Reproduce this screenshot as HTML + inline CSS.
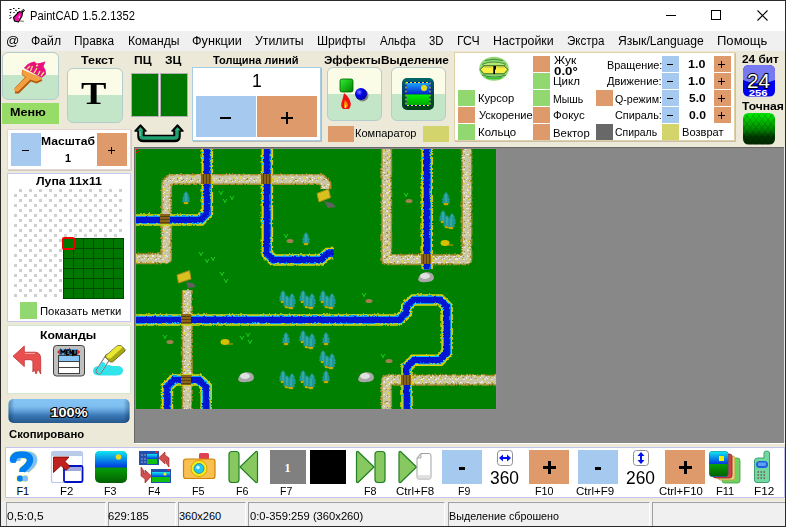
<!DOCTYPE html>
<html><head><meta charset="utf-8">
<style>
*{margin:0;padding:0;box-sizing:border-box}
html,body{width:786px;height:527px;overflow:hidden;background:#ece9d8;font-family:"Liberation Sans",sans-serif;font-size:11px;color:#000;position:relative}
.a{position:absolute}
.t{position:absolute;white-space:nowrap;line-height:1;transform-origin:0 0}
#menu span{position:absolute;top:35px;white-space:nowrap;font-size:12px;line-height:1}
.btn{position:absolute;border:1px solid #b4cccc;border-radius:6px}
.bl{position:absolute;background:#a6c9ef}
.or{position:absolute;background:#de9a6a}
.gr{position:absolute;background:#92d870}
.ye{position:absolute;background:#d4d46c}
.dg{position:absolute;background:#686868}
svg{position:absolute;overflow:visible}
</style></head><body>
<div class="a" style="left:0;top:0;width:786px;height:31px;background:#fff"></div>
<div class="a" style="left:0;top:31px;width:786px;height:20px;background:#f0f0f0"></div>

<!-- window controls -->
<div class="a" style="left:666px;top:15px;width:10px;height:1px;background:#000"></div>
<div class="a" style="left:711px;top:10px;width:10px;height:10px;border:1px solid #000"></div>
<svg style="left:757px;top:10px" width="11" height="11"><path d="M0.5 0.5L10.5 10.5M10.5 0.5L0.5 10.5" stroke="#000" stroke-width="1.1"/></svg>

<!-- top toolbar -->
<div class="btn" style="left:2px;top:52px;width:57px;height:48px;background:linear-gradient(#fafce8 0,#fafce8 22px,#c4e6c8 22px)"></div>
<div class="a" style="left:2px;top:103px;width:57px;height:21px;background:#98dc68"></div>
<div class="btn" style="left:67px;top:68px;width:56px;height:55px;background:linear-gradient(#fafce8 0,#fafce8 26px,#c4e6c8 26px)"></div>
<div class="a" style="left:131px;top:73px;width:28px;height:44px;background:#007800;border:1px solid #b0b0b0"></div>
<div class="a" style="left:160px;top:73px;width:28px;height:44px;background:#007800;border:1px solid #b0b0b0"></div>
<div class="a" style="left:192px;top:67px;width:129px;height:74px;background:#fff;border:1px solid #a8cce4;box-shadow:1px 1px 0 #b8b8b8"></div>
<div class="bl" style="left:196px;top:96px;width:60px;height:41px"></div>
<div class="or" style="left:257px;top:96px;width:60px;height:41px"></div>
<div class="a" style="left:220px;top:117px;width:11px;height:2px;background:#000"></div>
<div class="a" style="left:281px;top:117px;width:12px;height:2px;background:#000"></div>
<div class="a" style="left:286px;top:112px;width:2px;height:12px;background:#000"></div>
<div class="btn" style="left:327px;top:67px;width:55px;height:54px;background:linear-gradient(#fafce8 0,#fafce8 26px,#c4e6c8 26px)"></div>
<div class="btn" style="left:391px;top:67px;width:55px;height:54px;background:linear-gradient(#fafce8 0,#fafce8 26px,#c4e6c8 26px)"></div>
<div class="or" style="left:328px;top:126px;width:26px;height:16px"></div>
<div class="ye" style="left:423px;top:126px;width:26px;height:16px"></div>
<!-- params panel -->
<div class="a" style="left:454px;top:52px;width:281px;height:89px;background:#fff;border:1px solid #e0d0a8;box-shadow:1px 1px 0 #c8c0a8"></div>
<div class="gr" style="left:458px;top:90px;width:17px;height:16px"></div>
<div class="or" style="left:458px;top:107px;width:17px;height:16px"></div>
<div class="gr" style="left:458px;top:124px;width:17px;height:16px"></div>
<div class="or" style="left:533px;top:56px;width:17px;height:16px"></div>
<div class="gr" style="left:533px;top:73px;width:17px;height:16px"></div>
<div class="gr" style="left:533px;top:90px;width:17px;height:16px"></div>
<div class="or" style="left:533px;top:107px;width:17px;height:16px"></div>
<div class="or" style="left:533px;top:124px;width:17px;height:16px"></div>
<div class="or" style="left:596px;top:90px;width:17px;height:16px"></div>
<div class="dg" style="left:596px;top:124px;width:17px;height:16px"></div>
<div class="bl" style="left:662px;top:56px;width:17px;height:16px"></div>
<div class="bl" style="left:662px;top:73px;width:17px;height:16px"></div>
<div class="bl" style="left:662px;top:90px;width:17px;height:16px"></div>
<div class="bl" style="left:662px;top:107px;width:17px;height:16px"></div>
<div class="ye" style="left:662px;top:124px;width:17px;height:16px"></div>
<div class="or" style="left:714px;top:56px;width:17px;height:16px"></div>
<div class="or" style="left:714px;top:73px;width:17px;height:16px"></div>
<div class="or" style="left:714px;top:90px;width:17px;height:16px"></div>
<div class="or" style="left:714px;top:107px;width:17px;height:16px"></div>
<!-- minus/plus signs in params -->
<div class="a" style="left:667px;top:64px;width:6px;height:1px;background:#000"></div>
<div class="a" style="left:667px;top:81px;width:6px;height:1px;background:#000"></div>
<div class="a" style="left:667px;top:98px;width:6px;height:1px;background:#000"></div>
<div class="a" style="left:667px;top:115px;width:6px;height:1px;background:#000"></div>
<div class="a" style="left:718px;top:64px;width:7px;height:1px;background:#000"></div>
<div class="a" style="left:721px;top:61px;width:1px;height:7px;background:#000"></div>
<div class="a" style="left:718px;top:81px;width:7px;height:1px;background:#000"></div>
<div class="a" style="left:721px;top:78px;width:1px;height:7px;background:#000"></div>
<div class="a" style="left:718px;top:98px;width:7px;height:1px;background:#000"></div>
<div class="a" style="left:721px;top:95px;width:1px;height:7px;background:#000"></div>
<div class="a" style="left:718px;top:115px;width:7px;height:1px;background:#000"></div>
<div class="a" style="left:721px;top:112px;width:1px;height:7px;background:#000"></div>

<!-- left panel -->
<div class="a" style="left:7px;top:129px;width:124px;height:41px;background:#fff;border:1px solid #e4d4d4;box-shadow:1px 1px 0 #d0ccc0"></div>
<div class="bl" style="left:11px;top:133px;width:30px;height:33px"></div>
<div class="or" style="left:97px;top:133px;width:30px;height:33px"></div>
<div class="a" style="left:22px;top:150px;width:7px;height:1px;background:#000"></div>
<div class="a" style="left:108px;top:150px;width:7px;height:1px;background:#000"></div>
<div class="a" style="left:111px;top:147px;width:1px;height:7px;background:#000"></div>
<div class="a" style="left:7px;top:173px;width:124px;height:149px;background:#fff;border:1px solid #c8c8f4"></div>



<div class="gr" style="left:20px;top:302px;width:17px;height:17px"></div>
<svg style="left:0;top:0" width="140" height="330" viewBox="0 0 140 330"><defs><pattern id="dots" x="13" y="188" width="10" height="10" patternUnits="userSpaceOnUse"><rect x="6" y="1" width="3" height="3" fill="#cfcfcf"/><rect x="1" y="6" width="3" height="3" fill="#cfcfcf"/></pattern>
<pattern id="grid" x="63" y="238" width="10" height="10" patternUnits="userSpaceOnUse"><rect width="10" height="10" fill="#004800"/><rect x="1" y="1" width="9" height="9" fill="#007800"/></pattern></defs>
<rect x="13" y="188" width="110" height="110" fill="url(#dots)"/>
<rect x="63" y="238" width="61" height="61" fill="url(#grid)"/><rect x="63" y="298" width="61" height="1" fill="#004800"/><rect x="123" y="238" width="1" height="61" fill="#004800"/>
<rect x="63" y="238" width="11" height="11" fill="none" stroke="#f00000" stroke-width="2" rx="1"/></svg>

<div class="a" style="left:7px;top:325px;width:124px;height:69px;background:#fff;border:1px solid #d0e8d0"></div>


<!-- canvas area -->
<div class="a" style="left:134px;top:147px;width:650px;height:296px;background:#888;border-left:1px solid #686868;border-top:1px solid #686868"></div>
<div class="a" style="left:784px;top:147px;width:1px;height:297px;background:#e8e8e8"></div>
<div class="a" style="left:134px;top:443px;width:651px;height:1px;background:#fff"></div>
<div class="a" style="left:135px;top:148px;width:362px;height:262px;background:#908890"></div>
<svg style="left:136px;top:149px" width="360" height="260" viewBox="136 149 360 260"><defs><clipPath id="cc"><rect x="136" y="149" width="360" height="260"/></clipPath><pattern id="rt" width="7" height="6" patternUnits="userSpaceOnUse"><rect width="7" height="6" fill="#c8c4a4"/><rect x="0" y="0" width="2" height="1" fill="#e4e4dc"/><rect x="4" y="3" width="2" height="1" fill="#e8e8e0"/><rect x="2" y="2" width="1" height="2" fill="#e0d840"/><rect x="5" y="0" width="1" height="1" fill="#d8d040"/><rect x="1" y="4" width="1" height="1" fill="#a08c38"/><rect x="6" y="5" width="1" height="1" fill="#b0a048"/><rect x="3" y="5" width="1" height="1" fill="#eeeee4"/></pattern><filter id="jit" x="-5%" y="-5%" width="110%" height="110%"><feTurbulence type="turbulence" baseFrequency="0.35" numOctaves="1" seed="3"/><feDisplacementMap in="SourceGraphic" scale="2.2" xChannelSelector="R" yChannelSelector="G"/></filter></defs><g clip-path="url(#cc)"><rect x="136" y="149" width="360" height="260" fill="#008000"/><g filter="url(#jit)"><path d="M325,188 V183 L320.5,178.6 H170 L165.6,183 V257.7 H130" fill="none" stroke="#a48a2c" stroke-width="11" stroke-linejoin="round"/><path d="M325,188 V183 L320.5,178.6 H170 L165.6,183 V257.7 H130" fill="none" stroke="url(#rt)" stroke-width="8" stroke-linejoin="round"/><path d="M385.7,140 V258.8 H465.9 V140" fill="none" stroke="#a48a2c" stroke-width="11" stroke-linejoin="round"/><path d="M385.7,140 V258.8 H465.9 V140" fill="none" stroke="url(#rt)" stroke-width="8" stroke-linejoin="round"/><path d="M186.3,289.2 V415" fill="none" stroke="#a48a2c" stroke-width="11" stroke-linejoin="round"/><path d="M186.3,289.2 V415" fill="none" stroke="url(#rt)" stroke-width="8" stroke-linejoin="round"/><path d="M385.6,415 V379.2 H500" fill="none" stroke="#a48a2c" stroke-width="11" stroke-linejoin="round"/><path d="M385.6,415 V379.2 H500" fill="none" stroke="url(#rt)" stroke-width="8" stroke-linejoin="round"/></g><g filter="url(#jit)"><path d="M206.3,140 V212.4 L199.7,218.9 H130" fill="none" stroke="#e0d000" stroke-width="11.5"/><path d="M206.3,140 V212.4 L199.7,218.9 H130" fill="none" stroke="#10c8f8" stroke-width="8.5"/><path d="M206.3,140 V212.4 L199.7,218.9 H130" fill="none" stroke="#0414d0" stroke-width="6.5"/><path d="M266.3,140 V253 L272.3,259 H320 L327,252.5 H333" fill="none" stroke="#e0d000" stroke-width="11.5"/><path d="M266.3,140 V253 L272.3,259 H320 L327,252.5 H333" fill="none" stroke="#10c8f8" stroke-width="8.5"/><path d="M266.3,140 V253 L272.3,259 H320 L327,252.5 H333" fill="none" stroke="#0414d0" stroke-width="6.5"/><path d="M426.2,140 V268.6" fill="none" stroke="#e0d000" stroke-width="11.5"/><path d="M426.2,140 V268.6" fill="none" stroke="#10c8f8" stroke-width="8.5"/><path d="M426.2,140 V268.6" fill="none" stroke="#0414d0" stroke-width="6.5"/><path d="M130,318.9 H398.5 L405.7,311.7 V306 L412.8,298.9 H439 L446.1,306 V351.9 L438.8,359.2 H413 L406,366.2 V415" fill="none" stroke="#e0d000" stroke-width="11.5"/><path d="M130,318.9 H398.5 L405.7,311.7 V306 L412.8,298.9 H439 L446.1,306 V351.9 L438.8,359.2 H413 L406,366.2 V415" fill="none" stroke="#10c8f8" stroke-width="8.5"/><path d="M130,318.9 H398.5 L405.7,311.7 V306 L412.8,298.9 H439 L446.1,306 V351.9 L438.8,359.2 H413 L406,366.2 V415" fill="none" stroke="#0414d0" stroke-width="6.5"/><path d="M166.4,415 V386 L173.4,379 H198.2 L205.2,386 V415" fill="none" stroke="#e0d000" stroke-width="11.5"/><path d="M166.4,415 V386 L173.4,379 H198.2 L205.2,386 V415" fill="none" stroke="#10c8f8" stroke-width="8.5"/><path d="M166.4,415 V386 L173.4,379 H198.2 L205.2,386 V415" fill="none" stroke="#0414d0" stroke-width="6.5"/></g><rect x="201" y="174" width="10" height="10" fill="#8a6418"/><path d="M203.5,174v10M206.5,174v10M209.5,174v10" stroke="#5a4010" stroke-width="1"/><rect x="261" y="174" width="10" height="10" fill="#8a6418"/><path d="M263.5,174v10M266.5,174v10M269.5,174v10" stroke="#5a4010" stroke-width="1"/><rect x="160" y="214" width="10" height="10" fill="#8a6418"/><path d="M160,216.5h10M160,219.5h10M160,222.5h10" stroke="#5a4010" stroke-width="1"/><rect x="421" y="254" width="10" height="10" fill="#8a6418"/><path d="M423.5,254v10M426.5,254v10M429.5,254v10" stroke="#5a4010" stroke-width="1"/><rect x="181" y="314" width="10" height="10" fill="#8a6418"/><path d="M181,316.5h10M181,319.5h10M181,322.5h10" stroke="#5a4010" stroke-width="1"/><rect x="181" y="375" width="10" height="10" fill="#8a6418"/><path d="M181,377.5h10M181,380.5h10M181,383.5h10" stroke="#5a4010" stroke-width="1"/><rect x="401" y="375" width="10" height="10" fill="#8a6418"/><path d="M403.5,375v10M406.5,375v10M409.5,375v10" stroke="#5a4010" stroke-width="1"/><path d="M404,193 l2,3 l2,-3 M406,196 v1" stroke="#20d020" stroke-width="1" fill="none"/><path d="M284,234 l2,3 l2,-3 M286,237 v1" stroke="#20d020" stroke-width="1" fill="none"/><path d="M362,293 l2,3 l2,-3 M364,296 v1" stroke="#20d020" stroke-width="1" fill="none"/><path d="M381,354 l2,3 l2,-3 M383,357 v1" stroke="#20d020" stroke-width="1" fill="none"/><path d="M163,335 l2,3 l2,-3 M165,338 v1" stroke="#20d020" stroke-width="1" fill="none"/><path d="M219,191 l2,3 l2,-3 M221,194 v1" stroke="#20d020" stroke-width="1" fill="none"/><path d="M223,199 l2,3 l2,-3 M225,202 v1" stroke="#20d020" stroke-width="1" fill="none"/><path d="M230,196 l2,3 l2,-3 M232,199 v1" stroke="#20d020" stroke-width="1" fill="none"/><path d="M199,252 l2,3 l2,-3 M201,255 v1" stroke="#20d020" stroke-width="1" fill="none"/><path d="M205,259 l2,3 l2,-3 M207,262 v1" stroke="#20d020" stroke-width="1" fill="none"/><path d="M211,257 l2,3 l2,-3 M213,260 v1" stroke="#20d020" stroke-width="1" fill="none"/><path d="M220,272 l2,3 l2,-3 M222,275 v1" stroke="#20d020" stroke-width="1" fill="none"/><path d="M224,279 l2,3 l2,-3 M226,282 v1" stroke="#20d020" stroke-width="1" fill="none"/><path d="M240,336 l2,3 l2,-3 M242,339 v1" stroke="#20d020" stroke-width="1" fill="none"/><path d="M248,340 l2,3 l2,-3 M250,343 v1" stroke="#20d020" stroke-width="1" fill="none"/><path d="M246,333 l2,3 l2,-3 M248,336 v1" stroke="#20d020" stroke-width="1" fill="none"/><ellipse cx="409" cy="201" rx="3.5" ry="2" fill="#a08050"/><ellipse cx="290" cy="241" rx="3.5" ry="2" fill="#a08050"/><ellipse cx="369" cy="301" rx="3.5" ry="2" fill="#a08050"/><ellipse cx="389" cy="361" rx="3.5" ry="2" fill="#a08050"/><ellipse cx="170" cy="342" rx="3.5" ry="2" fill="#a08050"/><path d="M186,191 L189,195 L188,195 L190,199 L189,199 L190,202 L182,202 L183,199 L182,199 L184,195 L183,195Z" fill="#1c9898"/><path d="M186,193 V201" stroke="#50b8a8" stroke-width="1"/><ellipse cx="186" cy="203" rx="2.5" ry="1.2" fill="#c8a800"/><path d="M306,232 L309,236 L308,236 L310,240 L309,240 L310,243 L302,243 L303,240 L302,240 L304,236 L303,236Z" fill="#1c9898"/><path d="M306,234 V242" stroke="#50b8a8" stroke-width="1"/><ellipse cx="306" cy="244" rx="2.5" ry="1.2" fill="#c8a800"/><path d="M446,192 L449,196 L448,196 L450,200 L449,200 L450,203 L442,203 L443,200 L442,200 L444,196 L443,196Z" fill="#1c9898"/><path d="M446,194 V202" stroke="#50b8a8" stroke-width="1"/><ellipse cx="446" cy="204" rx="2.5" ry="1.2" fill="#c8a800"/><path d="M286,332 L289,336 L288,336 L290,340 L289,340 L290,343 L282,343 L283,340 L282,340 L284,336 L283,336Z" fill="#1c9898"/><path d="M286,334 V342" stroke="#50b8a8" stroke-width="1"/><ellipse cx="286" cy="344" rx="2.5" ry="1.2" fill="#c8a800"/><path d="M326,332 L329,336 L328,336 L330,340 L329,340 L330,343 L322,343 L323,340 L322,340 L324,336 L323,336Z" fill="#1c9898"/><path d="M326,334 V342" stroke="#50b8a8" stroke-width="1"/><ellipse cx="326" cy="344" rx="2.5" ry="1.2" fill="#c8a800"/><path d="M326,370 L329,374 L328,374 L330,378 L329,378 L330,381 L322,381 L323,378 L322,378 L324,374 L323,374Z" fill="#1c9898"/><path d="M326,372 V380" stroke="#50b8a8" stroke-width="1"/><ellipse cx="326" cy="382" rx="2.5" ry="1.2" fill="#c8a800"/><path d="M446,192 L449,196 L448,196 L450,200 L449,200 L450,203 L442,203 L443,200 L442,200 L444,196 L443,196Z" fill="#1c9898"/><path d="M446,194 V202" stroke="#50b8a8" stroke-width="1"/><ellipse cx="446" cy="204" rx="2.5" ry="1.2" fill="#c8a800"/><path d="M283,290 L286,294 L285,294 L287,298 L286,298 L287,301 L279,301 L280,298 L279,298 L281,294 L280,294Z" fill="#1c9898"/><path d="M283,292 V300" stroke="#50b8a8" stroke-width="1"/><ellipse cx="283" cy="302" rx="2.5" ry="1.2" fill="#c8a800"/><path d="M292,293 L295,297 L294,297 L296,301 L295,301 L296,304 L288,304 L289,301 L288,301 L290,297 L289,297Z" fill="#1c9898"/><path d="M292,295 V303" stroke="#50b8a8" stroke-width="1"/><ellipse cx="292" cy="305" rx="2.5" ry="1.2" fill="#c8a800"/><path d="M287,295 L290,299 L289,299 L291,303 L290,303 L291,306 L283,306 L284,303 L283,303 L285,299 L284,299Z" fill="#1c9898"/><path d="M287,297 V305" stroke="#50b8a8" stroke-width="1"/><ellipse cx="287" cy="307" rx="2.5" ry="1.2" fill="#c8a800"/><path d="M291,296 L294,300 L293,300 L295,304 L294,304 L295,307 L287,307 L288,304 L287,304 L289,300 L288,300Z" fill="#1c9898"/><path d="M291,298 V306" stroke="#50b8a8" stroke-width="1"/><ellipse cx="291" cy="308" rx="2.5" ry="1.2" fill="#c8a800"/><path d="M303,290 L306,294 L305,294 L307,298 L306,298 L307,301 L299,301 L300,298 L299,298 L301,294 L300,294Z" fill="#1c9898"/><path d="M303,292 V300" stroke="#50b8a8" stroke-width="1"/><ellipse cx="303" cy="302" rx="2.5" ry="1.2" fill="#c8a800"/><path d="M312,293 L315,297 L314,297 L316,301 L315,301 L316,304 L308,304 L309,301 L308,301 L310,297 L309,297Z" fill="#1c9898"/><path d="M312,295 V303" stroke="#50b8a8" stroke-width="1"/><ellipse cx="312" cy="305" rx="2.5" ry="1.2" fill="#c8a800"/><path d="M307,295 L310,299 L309,299 L311,303 L310,303 L311,306 L303,306 L304,303 L303,303 L305,299 L304,299Z" fill="#1c9898"/><path d="M307,297 V305" stroke="#50b8a8" stroke-width="1"/><ellipse cx="307" cy="307" rx="2.5" ry="1.2" fill="#c8a800"/><path d="M311,296 L314,300 L313,300 L315,304 L314,304 L315,307 L307,307 L308,304 L307,304 L309,300 L308,300Z" fill="#1c9898"/><path d="M311,298 V306" stroke="#50b8a8" stroke-width="1"/><ellipse cx="311" cy="308" rx="2.5" ry="1.2" fill="#c8a800"/><path d="M323,290 L326,294 L325,294 L327,298 L326,298 L327,301 L319,301 L320,298 L319,298 L321,294 L320,294Z" fill="#1c9898"/><path d="M323,292 V300" stroke="#50b8a8" stroke-width="1"/><ellipse cx="323" cy="302" rx="2.5" ry="1.2" fill="#c8a800"/><path d="M332,293 L335,297 L334,297 L336,301 L335,301 L336,304 L328,304 L329,301 L328,301 L330,297 L329,297Z" fill="#1c9898"/><path d="M332,295 V303" stroke="#50b8a8" stroke-width="1"/><ellipse cx="332" cy="305" rx="2.5" ry="1.2" fill="#c8a800"/><path d="M327,295 L330,299 L329,299 L331,303 L330,303 L331,306 L323,306 L324,303 L323,303 L325,299 L324,299Z" fill="#1c9898"/><path d="M327,297 V305" stroke="#50b8a8" stroke-width="1"/><ellipse cx="327" cy="307" rx="2.5" ry="1.2" fill="#c8a800"/><path d="M331,296 L334,300 L333,300 L335,304 L334,304 L335,307 L327,307 L328,304 L327,304 L329,300 L328,300Z" fill="#1c9898"/><path d="M331,298 V306" stroke="#50b8a8" stroke-width="1"/><ellipse cx="331" cy="308" rx="2.5" ry="1.2" fill="#c8a800"/><path d="M303,330 L306,334 L305,334 L307,338 L306,338 L307,341 L299,341 L300,338 L299,338 L301,334 L300,334Z" fill="#1c9898"/><path d="M303,332 V340" stroke="#50b8a8" stroke-width="1"/><ellipse cx="303" cy="342" rx="2.5" ry="1.2" fill="#c8a800"/><path d="M312,333 L315,337 L314,337 L316,341 L315,341 L316,344 L308,344 L309,341 L308,341 L310,337 L309,337Z" fill="#1c9898"/><path d="M312,335 V343" stroke="#50b8a8" stroke-width="1"/><ellipse cx="312" cy="345" rx="2.5" ry="1.2" fill="#c8a800"/><path d="M307,335 L310,339 L309,339 L311,343 L310,343 L311,346 L303,346 L304,343 L303,343 L305,339 L304,339Z" fill="#1c9898"/><path d="M307,337 V345" stroke="#50b8a8" stroke-width="1"/><ellipse cx="307" cy="347" rx="2.5" ry="1.2" fill="#c8a800"/><path d="M311,336 L314,340 L313,340 L315,344 L314,344 L315,347 L307,347 L308,344 L307,344 L309,340 L308,340Z" fill="#1c9898"/><path d="M311,338 V346" stroke="#50b8a8" stroke-width="1"/><ellipse cx="311" cy="348" rx="2.5" ry="1.2" fill="#c8a800"/><path d="M323,350 L326,354 L325,354 L327,358 L326,358 L327,361 L319,361 L320,358 L319,358 L321,354 L320,354Z" fill="#1c9898"/><path d="M323,352 V360" stroke="#50b8a8" stroke-width="1"/><ellipse cx="323" cy="362" rx="2.5" ry="1.2" fill="#c8a800"/><path d="M332,353 L335,357 L334,357 L336,361 L335,361 L336,364 L328,364 L329,361 L328,361 L330,357 L329,357Z" fill="#1c9898"/><path d="M332,355 V363" stroke="#50b8a8" stroke-width="1"/><ellipse cx="332" cy="365" rx="2.5" ry="1.2" fill="#c8a800"/><path d="M327,355 L330,359 L329,359 L331,363 L330,363 L331,366 L323,366 L324,363 L323,363 L325,359 L324,359Z" fill="#1c9898"/><path d="M327,357 V365" stroke="#50b8a8" stroke-width="1"/><ellipse cx="327" cy="367" rx="2.5" ry="1.2" fill="#c8a800"/><path d="M331,356 L334,360 L333,360 L335,364 L334,364 L335,367 L327,367 L328,364 L327,364 L329,360 L328,360Z" fill="#1c9898"/><path d="M331,358 V366" stroke="#50b8a8" stroke-width="1"/><ellipse cx="331" cy="368" rx="2.5" ry="1.2" fill="#c8a800"/><path d="M283,370 L286,374 L285,374 L287,378 L286,378 L287,381 L279,381 L280,378 L279,378 L281,374 L280,374Z" fill="#1c9898"/><path d="M283,372 V380" stroke="#50b8a8" stroke-width="1"/><ellipse cx="283" cy="382" rx="2.5" ry="1.2" fill="#c8a800"/><path d="M292,373 L295,377 L294,377 L296,381 L295,381 L296,384 L288,384 L289,381 L288,381 L290,377 L289,377Z" fill="#1c9898"/><path d="M292,375 V383" stroke="#50b8a8" stroke-width="1"/><ellipse cx="292" cy="385" rx="2.5" ry="1.2" fill="#c8a800"/><path d="M287,375 L290,379 L289,379 L291,383 L290,383 L291,386 L283,386 L284,383 L283,383 L285,379 L284,379Z" fill="#1c9898"/><path d="M287,377 V385" stroke="#50b8a8" stroke-width="1"/><ellipse cx="287" cy="387" rx="2.5" ry="1.2" fill="#c8a800"/><path d="M291,376 L294,380 L293,380 L295,384 L294,384 L295,387 L287,387 L288,384 L287,384 L289,380 L288,380Z" fill="#1c9898"/><path d="M291,378 V386" stroke="#50b8a8" stroke-width="1"/><ellipse cx="291" cy="388" rx="2.5" ry="1.2" fill="#c8a800"/><path d="M303,370 L306,374 L305,374 L307,378 L306,378 L307,381 L299,381 L300,378 L299,378 L301,374 L300,374Z" fill="#1c9898"/><path d="M303,372 V380" stroke="#50b8a8" stroke-width="1"/><ellipse cx="303" cy="382" rx="2.5" ry="1.2" fill="#c8a800"/><path d="M312,373 L315,377 L314,377 L316,381 L315,381 L316,384 L308,384 L309,381 L308,381 L310,377 L309,377Z" fill="#1c9898"/><path d="M312,375 V383" stroke="#50b8a8" stroke-width="1"/><ellipse cx="312" cy="385" rx="2.5" ry="1.2" fill="#c8a800"/><path d="M307,375 L310,379 L309,379 L311,383 L310,383 L311,386 L303,386 L304,383 L303,383 L305,379 L304,379Z" fill="#1c9898"/><path d="M307,377 V385" stroke="#50b8a8" stroke-width="1"/><ellipse cx="307" cy="387" rx="2.5" ry="1.2" fill="#c8a800"/><path d="M311,376 L314,380 L313,380 L315,384 L314,384 L315,387 L307,387 L308,384 L307,384 L309,380 L308,380Z" fill="#1c9898"/><path d="M311,378 V386" stroke="#50b8a8" stroke-width="1"/><ellipse cx="311" cy="388" rx="2.5" ry="1.2" fill="#c8a800"/><path d="M443,210 L446,214 L445,214 L447,218 L446,218 L447,221 L439,221 L440,218 L439,218 L441,214 L440,214Z" fill="#1c9898"/><path d="M443,212 V220" stroke="#50b8a8" stroke-width="1"/><ellipse cx="443" cy="222" rx="2.5" ry="1.2" fill="#c8a800"/><path d="M452,213 L455,217 L454,217 L456,221 L455,221 L456,224 L448,224 L449,221 L448,221 L450,217 L449,217Z" fill="#1c9898"/><path d="M452,215 V223" stroke="#50b8a8" stroke-width="1"/><ellipse cx="452" cy="225" rx="2.5" ry="1.2" fill="#c8a800"/><path d="M447,215 L450,219 L449,219 L451,223 L450,223 L451,226 L443,226 L444,223 L443,223 L445,219 L444,219Z" fill="#1c9898"/><path d="M447,217 V225" stroke="#50b8a8" stroke-width="1"/><ellipse cx="447" cy="227" rx="2.5" ry="1.2" fill="#c8a800"/><path d="M451,216 L454,220 L453,220 L455,224 L454,224 L455,227 L447,227 L448,224 L447,224 L449,220 L448,220Z" fill="#1c9898"/><path d="M451,218 V226" stroke="#50b8a8" stroke-width="1"/><ellipse cx="451" cy="228" rx="2.5" ry="1.2" fill="#c8a800"/><path d="M418,280 Q419,273 426,272 Q434,272 434,278 Q433,282 426,282 Q420,283 418,280Z" fill="#a8a8a8"/><ellipse cx="425" cy="276" rx="5" ry="3" fill="#e0e0e0"/><path d="M238,380 Q239,373 246,372 Q254,372 254,378 Q253,382 246,382 Q240,383 238,380Z" fill="#a8a8a8"/><ellipse cx="245" cy="376" rx="5" ry="3" fill="#e0e0e0"/><path d="M358,380 Q359,373 366,372 Q374,372 374,378 Q373,382 366,382 Q360,383 358,380Z" fill="#a8a8a8"/><ellipse cx="365" cy="376" rx="5" ry="3" fill="#e0e0e0"/><ellipse cx="445" cy="243" rx="4.5" ry="3" fill="#d8c000"/><path d="M448,245 h5" stroke="#c8a000"/><ellipse cx="225" cy="342" rx="4.5" ry="3" fill="#d8c000"/><path d="M228,344 h5" stroke="#c8a000"/><path d="M317,193.5 L328.5,189 L330.5,197.5 L319,202Z" fill="#d8c020" stroke="#a89018" stroke-width="1"/><path d="M324,201 L332,203 L336,207 L328,208Z" fill="#606060"/><path d="M177,275 L189.5,270.6 L191,279 L178.5,283Z" fill="#d8c020" stroke="#a89018" stroke-width="1"/><path d="M186,282 L193,283 L196,287 L188,288Z" fill="#606060"/><path d="M136,149h1v1h-1zM139,149h1v2h-1zM138,151h1v1h-1zM136,152h2v1h-2z" fill="#f00000"/></g></svg>

<!-- bottom toolbar -->
<div class="a" style="left:5px;top:447px;width:780px;height:51px;background:#fff;border:1px solid #c4c4f0"></div>
<div class="a" style="left:270px;top:450px;width:36px;height:34px;background:#808080"></div>
<div class="a" style="left:310px;top:450px;width:36px;height:34px;background:#000"></div>
<div class="bl" style="left:442px;top:450px;width:40px;height:34px"></div>
<div class="or" style="left:529px;top:450px;width:40px;height:34px"></div>
<div class="bl" style="left:578px;top:450px;width:40px;height:34px"></div>
<div class="or" style="left:665px;top:450px;width:40px;height:34px"></div>
<div class="a" style="left:459px;top:467px;width:6px;height:3px;background:#000"></div>
<div class="a" style="left:595px;top:467px;width:6px;height:3px;background:#000"></div>
<div class="a" style="left:543px;top:466px;width:13px;height:3px;background:#000"></div>
<div class="a" style="left:548px;top:461px;width:3px;height:13px;background:#000"></div>
<div class="a" style="left:679px;top:466px;width:13px;height:3px;background:#000"></div>
<div class="a" style="left:684px;top:461px;width:3px;height:13px;background:#000"></div>

<!-- status bar -->
<div class="a" style="left:1px;top:498px;width:784px;height:28px;background:linear-gradient(#ece9d8 0,#ece9d8 2px,#f0f0f0 4px)"></div>
<div class="a" style="left:6px;top:502px;width:100px;height:24px;border-left:1px solid #a0a0a0;border-top:1px solid #a0a0a0;border-right:1px solid #fff"></div>
<div class="a" style="left:108px;top:502px;width:68px;height:24px;border-left:1px solid #a0a0a0;border-top:1px solid #a0a0a0;border-right:1px solid #fff"></div>
<div class="a" style="left:178px;top:502px;width:68px;height:24px;border-left:1px solid #a0a0a0;border-top:1px solid #a0a0a0;border-right:1px solid #fff"></div>
<div class="a" style="left:248px;top:502px;width:197px;height:24px;border-left:1px solid #a0a0a0;border-top:1px solid #a0a0a0;border-right:1px solid #fff"></div>
<div class="a" style="left:448px;top:502px;width:202px;height:24px;border-left:1px solid #a0a0a0;border-top:1px solid #a0a0a0;border-right:1px solid #fff"></div>
<div class="a" style="left:652px;top:502px;width:133px;height:24px;border-left:1px solid #a0a0a0;border-top:1px solid #a0a0a0"></div>

<svg style="left:0;top:0" width="786" height="527" viewBox="0 0 786 527"><defs><linearGradient id="gsq" x1="0" y1="0" x2="1" y2="1"><stop offset="0" stop-color="#30f030"/><stop offset="1" stop-color="#008000"/></linearGradient><radialGradient id="gball" cx="0.35" cy="0.35" r="0.7"><stop offset="0" stop-color="#8080ff"/><stop offset="0.4" stop-color="#0000f0"/><stop offset="1" stop-color="#0000a0"/></radialGradient><linearGradient id="gsky" x1="0" y1="0" x2="0" y2="1"><stop offset="0" stop-color="#20b0f8"/><stop offset="1" stop-color="#0020d0"/></linearGradient><linearGradient id="ggrass" x1="0" y1="0" x2="0" y2="1"><stop offset="0" stop-color="#00f000"/><stop offset="1" stop-color="#00a000"/></linearGradient><linearGradient id="gsky2" x1="0" y1="0" x2="0" y2="1"><stop offset="0" stop-color="#10e8f0"/><stop offset="1" stop-color="#0038e0"/></linearGradient><linearGradient id="ggrass2" x1="0" y1="0" x2="0" y2="1"><stop offset="0" stop-color="#10e010"/><stop offset="1" stop-color="#006000"/></linearGradient><linearGradient id="gsel" x1="0" y1="0" x2="0" y2="1"><stop offset="0" stop-color="#006868"/><stop offset="0.5" stop-color="#003870"/><stop offset="0.5" stop-color="#005828"/><stop offset="1" stop-color="#004018"/></linearGradient><linearGradient id="gprec" x1="0" y1="0" x2="0" y2="1"><stop offset="0" stop-color="#00f000"/><stop offset="0.55" stop-color="#008000"/><stop offset="0.75" stop-color="#003800"/><stop offset="1" stop-color="#002800"/></linearGradient><linearGradient id="gbarh" x1="0" y1="0" x2="1" y2="0"><stop offset="0" stop-color="#002040" stop-opacity="0.35"/><stop offset="0.05" stop-color="#002040" stop-opacity="0"/><stop offset="0.95" stop-color="#002040" stop-opacity="0"/><stop offset="1" stop-color="#002040" stop-opacity="0.35"/></linearGradient><linearGradient id="gbar" x1="0" y1="0" x2="0" y2="1"><stop offset="0" stop-color="#84c4f4"/><stop offset="0.3" stop-color="#80c0f0"/><stop offset="0.45" stop-color="#68a8e0"/><stop offset="0.7" stop-color="#3876b4"/><stop offset="1" stop-color="#28588c"/></linearGradient></defs><path d="M20,21 L24,21.5" stroke="#a0a080" stroke-width="1.5"/><path d="M13.5,17.5 L19.5,11.5 L22.5,12.5 L22,16 L18.5,22 L14.5,21Z" fill="#f010a0" stroke="#000" stroke-width="1.1" stroke-linejoin="round"/><path d="M19.5,15 L20,17.5 L18.5,18" fill="#fff" stroke="none"/><path d="M21,11 L23.5,9 L25,10.5 L23,12.5Z" fill="#000"/><path d="M22.5,11 l1,-1" stroke="#fff" stroke-width="0.8"/><path d="M9.5,9.5 h2 M13,8.5 h1.5 M15.5,10 l1,1 M18,8.5 h1.5 M10,12 l1,1 M14,12 v1 M17,12.5 h1 M9.5,15.5 h1 M11,17 v1 M9.5,18.5 h1" stroke="#000" stroke-width="1.2"/><path d="M23.9,68 L27.9,64 L31,62.4 L34.3,61.5 L36.7,63.6 L40,63 L45.5,61.5 L43.5,66.4 L45.5,70 L46,74.3 L43,76.7 L41.5,77.8Z" fill="#e8107c"/><path d="M27,69 l3,-3 M30.5,71 l2,-5 M34,73 l3,-5 M38,75 l2,-4 M41,76 l3,-4 M36,66 l2,-1" stroke="#e8e080" stroke-width="1.4"/><path d="M25,76.5 L32,79.5 L19,93 L15.5,93 L14,89.5Z" fill="#f0a040"/><path d="M22.3,69.5 L41.8,78 L42,80.5 L36.5,83 L27.5,79.5 L22,75Z" fill="#f0a040"/><path d="M42,80 L36.5,82.5 L30.5,80.5 L18.5,92.5 L15,92.5" stroke="#b85810" stroke-width="1.8" fill="none"/><path d="M22.5,70 L22,74.5 L26,77 L14.5,88.5" stroke="#c87020" stroke-width="0.8" fill="none"/><path d="M141,131 V136.5 Q141,138.5 143.5,138.5 H174.5 Q177,138.5 177,136.5 V131" fill="none" stroke="#000" stroke-width="7.5"/><path d="M135,131 L140.5,125 L146,131Z M172,131 L177.5,125 L183,131Z" fill="#000" stroke="#000" stroke-width="1.5" stroke-linejoin="round"/><path d="M141,130 V136 Q141,138 143.5,138 H174.5 Q177,138 177,136 V130" fill="none" stroke="#20a070" stroke-width="3.5"/><path d="M137.5,130.5 L140.5,127 L143.5,130.5Z M174.5,130.5 L177.5,127 L180.5,130.5Z" fill="#30b080"/><path d="M140,131 V136" stroke="#80e0c0" stroke-width="1"/><rect x="340" y="79" width="13" height="13" rx="2" fill="url(#gsq)" stroke="#006000" stroke-width="0.8"/><circle cx="362.5" cy="95.5" r="6" fill="#808080"/><circle cx="361" cy="94" r="6" fill="url(#gball)"/><path d="M344,93 Q349,97 350,101 Q352,105 349,109 L343,109 Q340,106 342,101 Q343,98 344,93Z" fill="#f01010"/><path d="M345,100 Q348,103 348,106 L345,108 Q343,105 345,100Z" fill="#ff9000"/><path d="M345.5,104 l1,4 l-2,0Z" fill="#ffff40"/><rect x="402" y="78" width="32" height="32" rx="5" fill="url(#gsel)"/><rect x="405.5" y="82" width="25" height="12.5" fill="url(#gsky)"/><rect x="405.5" y="94.5" width="25" height="11.5" fill="url(#ggrass)"/><circle cx="424" cy="88" r="3" fill="#e8d820"/><rect x="406" y="82.5" width="24" height="23" fill="none" stroke="#0000c0" stroke-width="1"/><rect x="406" y="82.5" width="24" height="23" fill="none" stroke="#f0f000" stroke-width="1" stroke-dasharray="2 2"/><ellipse cx="494" cy="68.7" rx="14.8" ry="12" fill="#90d870"/><path d="M485,60.5 Q494,58 503,60.5" stroke="#408840" stroke-width="1" fill="none"/><path d="M482.5,64 Q494,60 505.5,64 L504,66 H484Z" fill="#b8e870" stroke="#408840" stroke-width="0.9"/><path d="M482,75 Q494,79 506,75" stroke="#408840" stroke-width="1" fill="none"/><path d="M486,77.5 Q494,79.5 502,77.5" stroke="#30c030" stroke-width="1.5" fill="none"/><path d="M480,69.5 L484,65.8 H504 L508,69.5 L504,73.8 H484Z" fill="#f8f040" stroke="#306830" stroke-width="1"/><path d="M484,67.5 H492 M497,67.5 H504" stroke="#d8d050" stroke-width="1"/><path d="M493.3,66 H496 V69 L495,70 V74 H493.3Z" fill="#000"/><path d="M749,65 H769 Q775,65 775,71 V90.6 Q775,96.6 769,96.6 H749 Q743,96.6 743,90.6 V71 Q743,65 749,65Z" fill="#0000f0"/><path d="M749,65 H769 Q775,65 775,71 V80 Q759,87 743,80 V71 Q743,65 749,65Z" fill="#7878f0"/><text x="747" y="87.6" textLength="23" lengthAdjust="spacingAndGlyphs" font-family="Liberation Sans" font-size="21" fill="#fff" stroke="#000" stroke-width="2" paint-order="stroke">24</text><text x="748.8" y="96" textLength="18.8" lengthAdjust="spacingAndGlyphs" font-family="Liberation Sans" font-weight="bold" font-size="9.5" fill="#fff">256</text><defs><pattern id="lat" width="6" height="8" patternUnits="userSpaceOnUse"><path d="M0,0 L3,4 L0,8 M6,0 L3,4 L6,8" stroke="#000" stroke-opacity="0.18" stroke-width="1" fill="none"/></pattern></defs><path d="M749,113 H769 Q775,113 775,119 V138.5 Q775,144.5 769,144.5 H749 Q743,144.5 743,138.5 V119 Q743,113 749,113Z" fill="url(#gprec)"/><path d="M749,113 H769 Q775,113 775,119 V138.5 Q775,144.5 769,144.5 H749 Q743,144.5 743,138.5 V119 Q743,113 749,113Z" fill="url(#lat)"/><path d="M13,356.3 L24.3,346 V352.2 H35 Q40.7,352.2 40.7,359 V374 L38,369 L36,374 L34,369 L32.9,372 V362 Q32.9,359.7 30,359.7 H24.3 V366.6Z" fill="#e85050" stroke="#c03030" stroke-width="0.8"/><path d="M25,353.5 H35" stroke="#f8a0a0" stroke-width="1"/><rect x="53.5" y="345.5" width="31" height="30.5" rx="3" fill="#c0c0c0" stroke="#404040" stroke-width="1"/><rect x="58.5" y="355.5" width="21" height="18" fill="#fff" stroke="#404040" stroke-width="1"/><rect x="59" y="356" width="20" height="5" fill="#88c8f8"/><path d="M58.5,361.5 H79.5 M58.5,367.5 H79.5" stroke="#404040" stroke-width="1"/><rect x="60" y="349" width="17" height="6" fill="#60a0e0"/><path d="M60,349 L57,352 L60,355Z M77,349 L80.5,352 L77,355Z" fill="#e03030"/><path d="M61,354.5 V350 L63,352.5 L65,350 V354.5 M66.5,350 V354.5 H69 M66.5,350 H69 M66.5,352.2 H68.5 M70,354.5 V350 L72.5,354.5 V350 M73.8,350 V354.5 H76.2 V350" stroke="#000" stroke-width="1.3" fill="none"/><path d="M93,371 Q93,366 100,366 H105 Q108,364 112,366 H117 Q123,366 123,370.5 Q123,375.5 116,375.5 H100 Q93,375.5 93,371Z" fill="#30e4ec"/><path d="M99,371 L108,357" stroke="#806868" stroke-width="6.5" stroke-linecap="round"/><path d="M99,371 L108,357" stroke="#ffffff" stroke-width="4.6" stroke-linecap="round"/><path d="M99,371 L103,364.5" stroke="#30e4ec" stroke-width="4.6" stroke-linecap="round"/><path d="M105.5,356 L117.5,345.5 H121 L125,349.5 V351 L112.5,362 H110.5 L105.5,357.5Z" fill="#a8a810" stroke="#505030" stroke-width="0.8"/><path d="M105.8,356 L117.5,345.8 H120.8 L122.5,347.5 L110.5,358.5 L108,358.5Z" fill="#e8e834"/><rect x="8.5" y="399" width="121" height="24" rx="5" fill="url(#gbar)"/><rect x="8.5" y="399" width="121" height="24" rx="5" fill="url(#gbarh)"/><text x="50.5" y="416.5" textLength="37" lengthAdjust="spacingAndGlyphs" font-family="Liberation Sans" font-weight="bold" font-size="13" fill="#fff" stroke="#000" stroke-width="2" paint-order="stroke">100%</text><path d="M17,461 Q17,454.5 25,454.5 Q34,454.5 34,460 Q34,464.5 26.5,470 V472" fill="none" stroke="#fff8a8" stroke-width="8" stroke-linejoin="round"/><path d="M13,461 Q13,454.5 21,454.5 Q30,454.5 30,460 Q30,464.5 22.5,470 V472" fill="none" stroke="#fff8a8" stroke-width="8" stroke-linejoin="round"/><path d="M17,461 Q17,454.5 25,454.5 Q34,454.5 34,460 Q34,464.5 26.5,470 V472" fill="none" stroke="#80c0f8" stroke-width="6.5" stroke-linejoin="round"/><path d="M13,461 Q13,454.5 21,454.5 Q30,454.5 30,460 Q30,464.5 22.5,470 V472" fill="none" stroke="#0080f0" stroke-width="6.5" stroke-linejoin="round"/><rect x="10" y="456" width="6.5" height="7" rx="2.5" fill="#0080f0"/><rect x="16" y="475" width="12.5" height="7" rx="3" fill="#fff8a8"/><rect x="17" y="475.5" width="6" height="6" rx="2.5" fill="#0080f0"/><rect x="22.5" y="475.5" width="5.5" height="6" rx="2.5" fill="#80c0f8"/><rect x="51.5" y="451.5" width="31" height="31" rx="2" fill="#fff" stroke="#b8c8f0" stroke-width="1.2"/><rect x="52" y="452" width="30" height="4" fill="#b8cce8"/><rect x="64" y="466" width="18.5" height="16" rx="1.5" fill="#fff" stroke="#0010c0" stroke-width="1.8"/><rect x="65" y="467" width="17" height="4" fill="#a0a8e0"/><path d="M53.5,457 L69,457 L65,461.5 L70,466.5 L66,470.5 L61,465.5 L53.5,472.5Z" fill="#c02020" stroke="#700000" stroke-width="0.8"/><rect x="95" y="451" width="32" height="32" rx="5" fill="url(#ggrass2)"/><path d="M95,467.5 V456 Q95,451 100,451 H122 Q127,451 127,456 V467.5Z" fill="url(#gsky2)"/><circle cx="118.5" cy="457" r="2.8" fill="#e8d820"/><rect x="139" y="451" width="20" height="14" fill="#2050b0"/><rect x="147" y="454" width="10" height="5" fill="url(#gsky2)"/><rect x="147" y="459" width="10" height="5" fill="#10c010"/><rect x="155" y="451" width="3" height="2" fill="#f02020"/><path d="M141,455 h2 M144,455 h2 M141,459 h2 M144,459 h2 M141,462 h2 M144,462 h2" stroke="#a0a0c0" stroke-width="1.2"/><rect x="151" y="469" width="20" height="14" fill="#2050b0"/><rect x="152" y="472" width="18" height="5" fill="url(#gsky2)"/><rect x="152" y="477" width="18" height="5" fill="#10c010"/><rect x="167" y="469" width="3" height="2" fill="#f02020"/><circle cx="165" cy="474" r="1.5" fill="#f0f000"/><path d="M158.5,458 L165,452 V455 L169,458 V467 L166,463 V460 L165,461 V464Z" fill="#d05050" stroke="#902020" stroke-width="0.6"/><path d="M151.5,476 L145,483 V479 L141,476 V467 L144,471 V474 L145,473 V470Z" fill="#d05050" stroke="#902020" stroke-width="0.6"/><rect x="199" y="453" width="10" height="6.5" rx="1.5" fill="#e04050"/><rect x="183.5" y="459" width="31.5" height="19.5" rx="2.5" fill="#f8c050" stroke="#d08000" stroke-width="1.2"/><circle cx="199" cy="468.5" r="8" fill="#f0f020" stroke="#e0a000" stroke-width="1"/><circle cx="199" cy="468.5" r="5" fill="#20c8f0" stroke="#1060a0" stroke-width="0.6"/><circle cx="198" cy="467.5" r="1.8" fill="#d0f8ff"/><rect x="229" y="451.5" width="10" height="31" rx="3" fill="#88c860" stroke="#208020" stroke-width="1.2"/><path d="M240,467 L256,451.5 Q257.5,451 257.5,453 V481 Q257.5,483 256,482.5Z" fill="#88c860" stroke="#208020" stroke-width="1.2" stroke-linejoin="round"/><text x="287.5" y="471.5" text-anchor="middle" font-family="Liberation Serif" font-weight="bold" font-size="12" fill="#fff">1</text><rect x="375" y="451.5" width="10" height="31" rx="3" fill="#88c860" stroke="#208020" stroke-width="1.2"/><path d="M374,467 L358,451.5 Q356.5,451 356.5,453 V481 Q356.5,483 358,482.5Z" fill="#88c860" stroke="#208020" stroke-width="1.2" stroke-linejoin="round"/><path d="M416.5,467 L400.5,451.5 Q399,451 399,453 V481 Q399,483 400.5,482.5Z" fill="#88c860" stroke="#208020" stroke-width="1.2" stroke-linejoin="round"/><path d="M421,453.5 H429 Q431,453.5 431,456 V477 Q431,479 429,479 H419 Q417,479 417,477 V458Z" fill="#fff" stroke="#a0a0a0" stroke-width="1"/><path d="M417,458 L421,453.5 V458Z" fill="#e0e0e0" stroke="#a0a0a0" stroke-width="0.8"/><rect x="417.5" y="475" width="13" height="3.5" fill="#e0e0e0"/><rect x="497.5" y="450.5" width="15" height="15" rx="3" fill="#fff" stroke="#909090" stroke-width="1"/><path d="M500,458 H510" stroke="#0010f0" stroke-width="2"/><path d="M499,458 L503,454.5 V461.5Z M511,458 L507,454.5 V461.5Z" fill="#0010f0"/><rect x="633.5" y="450.5" width="15" height="15" rx="3" fill="#fff" stroke="#909090" stroke-width="1"/><path d="M641,453 V463" stroke="#0010f0" stroke-width="2"/><path d="M641,452 L637.5,456 H644.5Z M641,464 L637.5,460 H644.5Z" fill="#0010f0"/><rect x="722" y="458" width="18" height="25" rx="2.5" fill="#70d060" stroke="#40a040" stroke-width="0.8"/><rect x="718" y="456" width="17" height="24" rx="2.5" fill="#e0d080" stroke="#c0a040" stroke-width="0.8"/><rect x="713" y="454" width="19" height="24" rx="2.5" fill="#d04040" stroke="#a02020" stroke-width="0.8"/><rect x="709.5" y="451.5" width="18.5" height="25" rx="2.5" fill="url(#ggrass2)" stroke="#1060a0" stroke-width="0.8"/><path d="M709.5,464 V454 Q709.5,451.5 712,451.5 H725.5 Q728,451.5 728,454 V464Z" fill="url(#gsky2)"/><rect x="719" y="456" width="5" height="5" fill="#f0f000"/><path d="M764,458 V453 Q764,451 766.5,451 Q769.5,451 769.5,453 V480 Q769.5,482.5 767,482.5 H757 Q754.5,482.5 754.5,480 V461 Q754.5,458 757.5,458Z" fill="#70d8a0" stroke="#40a070" stroke-width="1"/><rect x="756" y="461" width="12" height="7" rx="3.5" fill="#2060e0"/><rect x="758" y="462.5" width="8" height="3.5" rx="1" fill="#60a0f0"/><path d="M757.5,472 h1.5 M760.5,472 h1.5 M763.5,472 h1.5 M757.5,475 h1.5 M760.5,475 h1.5 M763.5,475 h1.5 M757.5,478 h1.5 M760.5,478 h1.5 M763.5,478 h1.5" stroke="#805050" stroke-width="1.5"/></svg>
<div class="t" style="left:6.21px;top:35.10px;font-family:'Liberation Sans',sans-serif;font-size:12px;font-weight:normal;color:#000;transform:scaleX(1.0900)">@</div>
<div class="t" style="left:30.98px;top:35.10px;font-family:'Liberation Sans',sans-serif;font-size:12px;font-weight:normal;color:#000;transform:scaleX(1.0179)">Файл</div>
<div class="t" style="left:74.41px;top:35.10px;font-family:'Liberation Sans',sans-serif;font-size:12px;font-weight:normal;color:#000;transform:scaleX(0.9897)">Правка</div>
<div class="t" style="left:127.99px;top:35.10px;font-family:'Liberation Sans',sans-serif;font-size:12px;font-weight:normal;color:#000;transform:scaleX(1.0122)">Команды</div>
<div class="t" style="left:192.45px;top:35.10px;font-family:'Liberation Sans',sans-serif;font-size:12px;font-weight:normal;color:#000;transform:scaleX(1.0543)">Функции</div>
<div class="t" style="left:255.48px;top:35.10px;font-family:'Liberation Sans',sans-serif;font-size:12px;font-weight:normal;color:#000;transform:scaleX(1.0217)">Утилиты</div>
<div class="t" style="left:317.39px;top:35.10px;font-family:'Liberation Sans',sans-serif;font-size:12px;font-weight:normal;color:#000;transform:scaleX(1.0064)">Шрифты</div>
<div class="t" style="left:379.60px;top:35.10px;font-family:'Liberation Sans',sans-serif;font-size:12px;font-weight:normal;color:#000;transform:scaleX(0.9395)">Альфа</div>
<div class="t" style="left:429.26px;top:35.10px;font-family:'Liberation Sans',sans-serif;font-size:12px;font-weight:normal;color:#000;transform:scaleX(0.9429)">3D</div>
<div class="t" style="left:457.28px;top:35.10px;font-family:'Liberation Sans',sans-serif;font-size:12px;font-weight:normal;color:#000;transform:scaleX(1.0250)">ГСЧ</div>
<div class="t" style="left:493.47px;top:35.10px;font-family:'Liberation Sans',sans-serif;font-size:12px;font-weight:normal;color:#000;transform:scaleX(1.0316)">Настройки</div>
<div class="t" style="left:567.34px;top:35.10px;font-family:'Liberation Sans',sans-serif;font-size:12px;font-weight:normal;color:#000;transform:scaleX(0.9632)">Экстра</div>
<div class="t" style="left:617.79px;top:35.10px;font-family:'Liberation Sans',sans-serif;font-size:12px;font-weight:normal;color:#000;transform:scaleX(1.0120)">Язык/Language</div>
<div class="t" style="left:716.81px;top:35.10px;font-family:'Liberation Sans',sans-serif;font-size:12px;font-weight:normal;color:#000;transform:scaleX(1.0867)">Помощь</div>
<div class="t" style="left:29.67px;top:10.00px;font-family:'Liberation Sans',sans-serif;font-size:12px;font-weight:normal;color:#000;transform:scaleX(0.9315)">PaintCAD 1.5.2.1352</div>
<div class="t" style="left:10.46px;top:106.80px;font-family:'Liberation Sans',sans-serif;font-size:11px;font-weight:bold;color:#000;transform:scaleX(1.1433)">Меню</div>
<div class="t" style="left:81.00px;top:54.90px;font-family:'Liberation Sans',sans-serif;font-size:11px;font-weight:bold;color:#000;transform:scaleX(1.1345)">Текст</div>
<div class="t" style="left:81.00px;top:76.50px;font-family:'Liberation Serif',serif;font-size:32px;font-weight:bold;color:#000;transform:scaleX(1.1905)">T</div>
<div class="t" style="left:134.40px;top:55.00px;font-family:'Liberation Sans',sans-serif;font-size:11px;font-weight:bold;color:#000;transform:scaleX(1.1000)">ПЦ</div>
<div class="t" style="left:164.50px;top:55.00px;font-family:'Liberation Sans',sans-serif;font-size:11px;font-weight:bold;color:#000;transform:scaleX(1.1000)">ЗЦ</div>
<div class="t" style="left:213.30px;top:54.70px;font-family:'Liberation Sans',sans-serif;font-size:11px;font-weight:bold;color:#000;transform:scaleX(1.0024)">Толщина линий</div>
<div class="t" style="left:251.78px;top:71.40px;font-family:'Liberation Sans',sans-serif;font-size:19px;font-weight:normal;color:#000;transform:scaleX(0.9222)">1</div>
<div class="t" style="left:323.93px;top:55.30px;font-family:'Liberation Sans',sans-serif;font-size:11px;font-weight:bold;color:#000;transform:scaleX(1.0654)">Эффекты</div>
<div class="t" style="left:380.92px;top:55.30px;font-family:'Liberation Sans',sans-serif;font-size:11px;font-weight:bold;color:#000;transform:scaleX(1.0774)">Выделение</div>
<div class="t" style="left:354.70px;top:128.00px;font-family:'Liberation Sans',sans-serif;font-size:11px;font-weight:normal;color:#000;transform:scaleX(1.0033)">Компаратор</div>
<div class="t" style="left:477.59px;top:93.30px;font-family:'Liberation Sans',sans-serif;font-size:11px;font-weight:normal;color:#000;transform:scaleX(1.0143)">Курсор</div>
<div class="t" style="left:478.60px;top:110.00px;font-family:'Liberation Sans',sans-serif;font-size:11px;font-weight:normal;color:#000;transform:scaleX(1.0038)">Ускорение</div>
<div class="t" style="left:477.56px;top:127.40px;font-family:'Liberation Sans',sans-serif;font-size:11px;font-weight:normal;color:#000;transform:scaleX(1.0400)">Кольцо</div>
<div class="t" style="left:553.80px;top:54.80px;font-family:'Liberation Sans',sans-serif;font-size:11px;font-weight:normal;color:#000;transform:scaleX(1.0900)">Жук</div>
<div class="t" style="left:554.30px;top:65.50px;font-family:'Liberation Sans',sans-serif;font-size:11px;font-weight:bold;color:#000;transform:scaleX(1.2105)">0.0°</div>
<div class="t" style="left:552.75px;top:76.30px;font-family:'Liberation Sans',sans-serif;font-size:11px;font-weight:normal;color:#000;transform:scaleX(1.0500)">Цикл</div>
<div class="t" style="left:552.85px;top:93.70px;font-family:'Liberation Sans',sans-serif;font-size:11px;font-weight:normal;color:#000;transform:scaleX(0.9533)">Мышь</div>
<div class="t" style="left:552.75px;top:109.50px;font-family:'Liberation Sans',sans-serif;font-size:11px;font-weight:normal;color:#000;transform:scaleX(1.0483)">Фокус</div>
<div class="t" style="left:552.77px;top:127.50px;font-family:'Liberation Sans',sans-serif;font-size:11px;font-weight:normal;color:#000;transform:scaleX(1.0324)">Вектор</div>
<div class="t" style="left:606.71px;top:59.50px;font-family:'Liberation Sans',sans-serif;font-size:11px;font-weight:normal;color:#000;transform:scaleX(0.9889)">Вращение:</div>
<div class="t" style="left:606.80px;top:75.80px;font-family:'Liberation Sans',sans-serif;font-size:11px;font-weight:normal;color:#000;transform:scaleX(1.0056)">Движение:</div>
<div class="t" style="left:614.50px;top:93.70px;font-family:'Liberation Sans',sans-serif;font-size:11px;font-weight:normal;color:#000;transform:scaleX(0.9708)">Q-режим:</div>
<div class="t" style="left:614.71px;top:109.90px;font-family:'Liberation Sans',sans-serif;font-size:11px;font-weight:normal;color:#000;transform:scaleX(0.9870)">Спираль:</div>
<div class="t" style="left:614.75px;top:127.00px;font-family:'Liberation Sans',sans-serif;font-size:11px;font-weight:normal;color:#000;transform:scaleX(0.9465)">Спираль</div>
<div class="t" style="left:681.59px;top:127.00px;font-family:'Liberation Sans',sans-serif;font-size:11px;font-weight:normal;color:#000;transform:scaleX(1.0075)">Возврат</div>
<div class="t" style="left:688.26px;top:58.80px;font-family:'Liberation Sans',sans-serif;font-size:11px;font-weight:bold;color:#000;transform:scaleX(1.1357)">1.0</div>
<div class="t" style="left:688.26px;top:75.80px;font-family:'Liberation Sans',sans-serif;font-size:11px;font-weight:bold;color:#000;transform:scaleX(1.1357)">1.0</div>
<div class="t" style="left:689.00px;top:92.80px;font-family:'Liberation Sans',sans-serif;font-size:11px;font-weight:bold;color:#000;transform:scaleX(1.0867)">5.0</div>
<div class="t" style="left:688.70px;top:109.80px;font-family:'Liberation Sans',sans-serif;font-size:11px;font-weight:bold;color:#000;transform:scaleX(1.1067)">0.0</div>
<div class="t" style="left:741.60px;top:54.00px;font-family:'Liberation Sans',sans-serif;font-size:11px;font-weight:bold;color:#000;transform:scaleX(1.0765)">24 бит</div>
<div class="t" style="left:742.20px;top:101.30px;font-family:'Liberation Sans',sans-serif;font-size:11px;font-weight:bold;color:#000;transform:scaleX(1.1027)">Точная</div>
<div class="t" style="left:41.30px;top:136.00px;font-family:'Liberation Sans',sans-serif;font-size:11px;font-weight:bold;color:#000;transform:scaleX(1.1021)">Масштаб</div>
<div class="t" style="left:64.52px;top:152.80px;font-family:'Liberation Sans',sans-serif;font-size:11px;font-weight:bold;color:#000;transform:scaleX(0.9800)">1</div>
<div class="t" style="left:35.60px;top:175.60px;font-family:'Liberation Sans',sans-serif;font-size:11px;font-weight:bold;color:#000;transform:scaleX(1.1169)">Лупа 11x11</div>
<div class="t" style="left:39.97px;top:305.50px;font-family:'Liberation Sans',sans-serif;font-size:11px;font-weight:normal;color:#000;transform:scaleX(1.0269)">Показать метки</div>
<div class="t" style="left:40.29px;top:330.00px;font-family:'Liberation Sans',sans-serif;font-size:11px;font-weight:bold;color:#000;transform:scaleX(1.1143)">Команды</div>
<div class="t" style="left:8.60px;top:428.60px;font-family:'Liberation Sans',sans-serif;font-size:11px;font-weight:bold;color:#000;transform:scaleX(1.0301)">Скопировано</div>
<div class="t" style="left:16.40px;top:485.50px;font-family:'Liberation Sans',sans-serif;font-size:11px;font-weight:normal;color:#000;transform:scaleX(1.0000)">F1</div>
<div class="t" style="left:59.56px;top:485.50px;font-family:'Liberation Sans',sans-serif;font-size:11px;font-weight:normal;color:#000;transform:scaleX(1.0364)">F2</div>
<div class="t" style="left:103.62px;top:485.50px;font-family:'Liberation Sans',sans-serif;font-size:11px;font-weight:normal;color:#000;transform:scaleX(0.9750)">F3</div>
<div class="t" style="left:147.84px;top:485.50px;font-family:'Liberation Sans',sans-serif;font-size:11px;font-weight:normal;color:#000;transform:scaleX(0.9583)">F4</div>
<div class="t" style="left:191.62px;top:485.50px;font-family:'Liberation Sans',sans-serif;font-size:11px;font-weight:normal;color:#000;transform:scaleX(0.9833)">F5</div>
<div class="t" style="left:235.53px;top:485.50px;font-family:'Liberation Sans',sans-serif;font-size:11px;font-weight:normal;color:#000;transform:scaleX(0.9750)">F6</div>
<div class="t" style="left:279.84px;top:485.50px;font-family:'Liberation Sans',sans-serif;font-size:11px;font-weight:normal;color:#000;transform:scaleX(0.9583)">F7</div>
<div class="t" style="left:363.62px;top:485.50px;font-family:'Liberation Sans',sans-serif;font-size:11px;font-weight:normal;color:#000;transform:scaleX(0.9750)">F8</div>
<div class="t" style="left:395.55px;top:485.50px;font-family:'Liberation Sans',sans-serif;font-size:11px;font-weight:normal;color:#000;transform:scaleX(1.0486)">Ctrl+F8</div>
<div class="t" style="left:457.74px;top:485.50px;font-family:'Liberation Sans',sans-serif;font-size:11px;font-weight:normal;color:#000;transform:scaleX(0.9583)">F9</div>
<div class="t" style="left:534.73px;top:485.50px;font-family:'Liberation Sans',sans-serif;font-size:11px;font-weight:normal;color:#000;transform:scaleX(0.9722)">F10</div>
<div class="t" style="left:575.55px;top:485.50px;font-family:'Liberation Sans',sans-serif;font-size:11px;font-weight:normal;color:#000;transform:scaleX(1.0486)">Ctrl+F9</div>
<div class="t" style="left:659.27px;top:485.50px;font-family:'Liberation Sans',sans-serif;font-size:11px;font-weight:normal;color:#000;transform:scaleX(1.0293)">Ctrl+F10</div>
<div class="t" style="left:716.39px;top:485.50px;font-family:'Liberation Sans',sans-serif;font-size:11px;font-weight:normal;color:#000;transform:scaleX(1.0059)">F11</div>
<div class="t" style="left:754.34px;top:485.50px;font-family:'Liberation Sans',sans-serif;font-size:11px;font-weight:normal;color:#000;transform:scaleX(1.0647)">F12</div>
<div class="t" style="left:489.83px;top:469.00px;font-family:'Liberation Sans',sans-serif;font-size:18px;font-weight:normal;color:#000;transform:scaleX(0.9655)">360</div>
<div class="t" style="left:625.63px;top:469.00px;font-family:'Liberation Sans',sans-serif;font-size:18px;font-weight:normal;color:#000;transform:scaleX(0.9655)">260</div>
<div class="t" style="left:7.40px;top:511.30px;font-family:'Liberation Sans',sans-serif;font-size:11px;font-weight:normal;color:#000;transform:scaleX(1.0879)">0,5:0,5</div>
<div class="t" style="left:108.28px;top:511.20px;font-family:'Liberation Sans',sans-serif;font-size:11px;font-weight:normal;color:#000;transform:scaleX(1.0231)">629:185</div>
<div class="t" style="left:179.00px;top:511.30px;font-family:'Liberation Sans',sans-serif;font-size:11px;font-weight:normal;color:#000;transform:scaleX(1.0000)">360x260</div>
<div class="t" style="left:249.60px;top:511.30px;font-family:'Liberation Sans',sans-serif;font-size:11px;font-weight:normal;color:#000;transform:scaleX(1.0180)">0:0-359:259 (360x260)</div>
<div class="t" style="left:448.62px;top:511.30px;font-family:'Liberation Sans',sans-serif;font-size:11px;font-weight:normal;color:#000;transform:scaleX(0.9766)">Выделение сброшено</div>

<!-- borders -->
<div class="a" style="left:0;top:0;width:786px;height:1px;background:#2b2b2b"></div>
<div class="a" style="left:0;top:0;width:1px;height:527px;background:#2b2b2b"></div>
<div class="a" style="left:785px;top:0;width:1px;height:527px;background:#2b2b2b"></div>
<div class="a" style="left:0;top:526px;width:786px;height:1px;background:#2b2b2b"></div>
</body></html>
